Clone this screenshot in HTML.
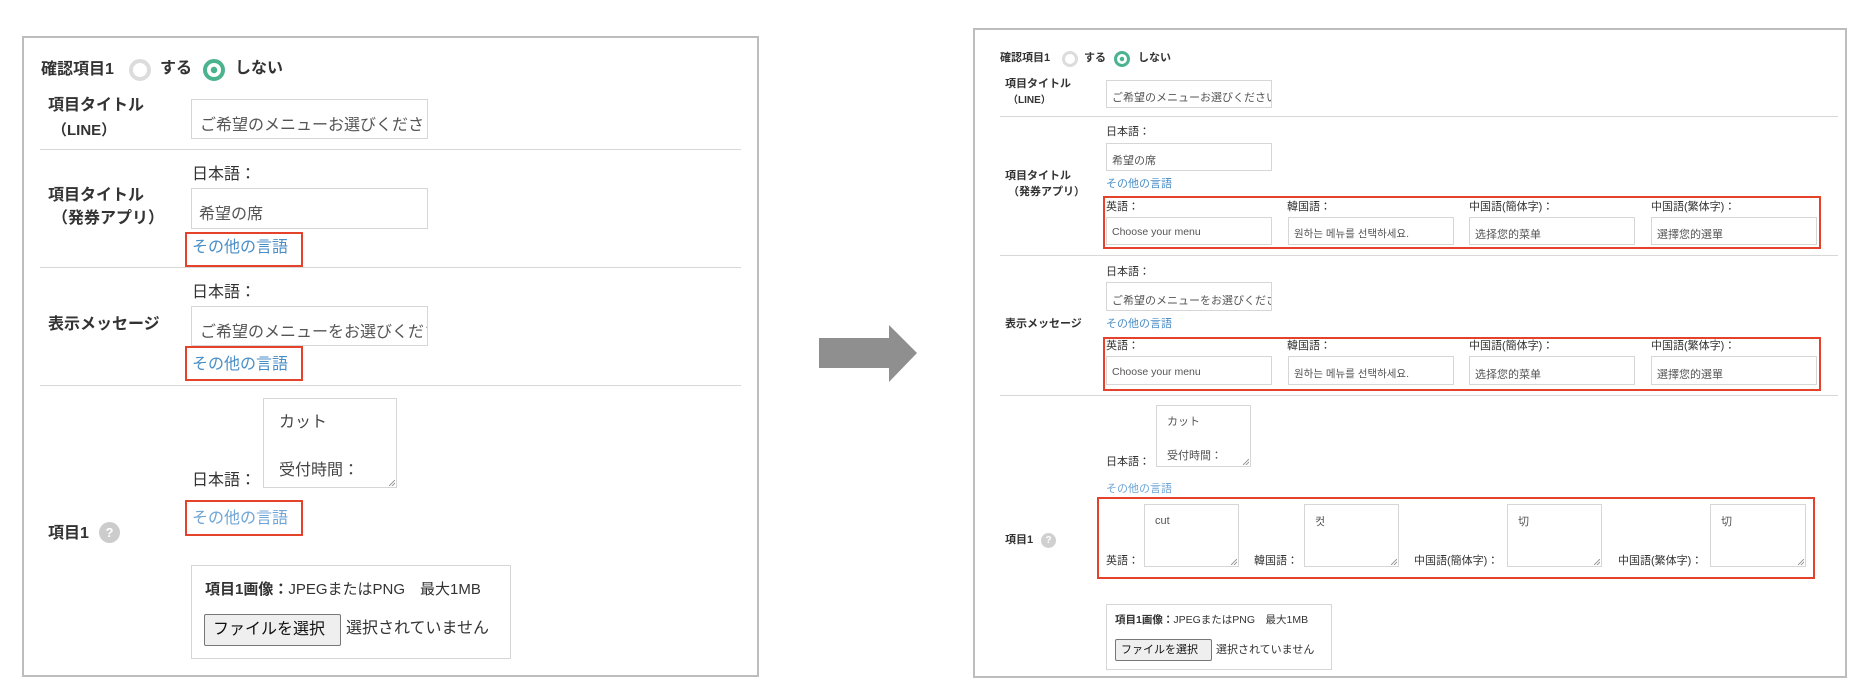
<!DOCTYPE html>
<html><head><meta charset="utf-8"><style>
*{margin:0;padding:0;box-sizing:border-box}
body{width:1866px;height:696px;background:#fff;position:relative;overflow:hidden;font-family:"Liberation Sans","Noto Sans CJK JP",sans-serif;color:#333}
.a{position:absolute;white-space:nowrap;line-height:1}
.b{font-weight:bold}
.box{position:absolute;border:1px solid #d6d6d6;background:#fff;overflow:hidden;white-space:nowrap;color:#555}
.red{position:absolute;border:2px solid #e5422b}
.hr{position:absolute;height:1px;background:#d8d8d8}
.lk{color:#4a8ec8}
.rad{position:absolute;border-radius:50%}
.ta:after{content:"";position:absolute;right:1px;bottom:1px;width:6px;height:6px;background:linear-gradient(135deg,transparent 45%,#999 46%,#999 55%,transparent 56%,transparent 70%,#999 71%,#999 80%,transparent 81%)}
.btn{position:absolute;background:#efefef;border:1px solid #777;border-radius:2px;color:#111;line-height:1}
</style></head><body>
<!-- LEFT PANEL -->
<div style="position:absolute;left:22px;top:36px;width:737px;height:641px;border:2px solid #bdbdbd"></div>
<div class="a b" style="left:41px;top:62px;font-size:16px">確認項目1</div>
<div class="rad" style="left:129px;top:59px;width:22px;height:22px;border:4px solid #dcdcdc"></div>
<div class="a b" style="left:160px;top:61px;font-size:16px">する</div>
<div class="rad" style="left:203px;top:59px;width:22px;height:22px;border:4px solid #4cb38f;background:radial-gradient(circle,#4cb38f 0 3px,#fff 3.5px)"></div>
<div class="a b" style="left:235px;top:61px;font-size:16px">しない</div>

<div class="a b" style="left:48px;top:98px;font-size:16px">項目タイトル</div>
<div class="a b" style="left:52px;top:123px;font-size:15px">（LINE）</div>
<div class="box" style="left:191px;top:99px;width:237px;height:40px;font-size:16px;padding:11px 0 0 8px">ご希望のメニューお選びくださ</div>
<div class="hr" style="left:40px;top:149px;width:701px"></div>

<div class="a" style="left:192px;top:167px;font-size:16px">日本語：</div>
<div class="box" style="left:191px;top:188px;width:237px;height:41px;font-size:16px;padding:11px 0 0 7px">希望の席</div>
<div class="a b" style="left:48px;top:188px;font-size:16px">項目タイトル</div>
<div class="a b" style="left:52px;top:211px;font-size:16px">（発券アプリ）</div>
<div class="red" style="left:185px;top:232px;width:118px;height:35px"></div>
<div class="a lk" style="left:192px;top:240px;font-size:16px">その他の言語</div>
<div class="hr" style="left:40px;top:267px;width:701px"></div>

<div class="a" style="left:192px;top:285px;font-size:16px">日本語：</div>
<div class="box" style="left:191px;top:306px;width:237px;height:40px;font-size:16px;padding:11px 0 0 8px">ご希望のメニューをお選びください</div>
<div class="a b" style="left:48px;top:317px;font-size:16px">表示メッセージ</div>
<div class="red" style="left:185px;top:346px;width:118px;height:35px"></div>
<div class="a lk" style="left:192px;top:357px;font-size:16px">その他の言語</div>
<div class="hr" style="left:40px;top:385px;width:701px"></div>

<div class="box ta" style="left:263px;top:398px;width:134px;height:90px;font-size:16px;padding:12px 0 0 15px;line-height:1.5;color:#444;white-space:normal">カット<br><br>受付時間：<br>10:00〜</div>
<div class="a" style="left:192px;top:473px;font-size:16px">日本語：</div>
<div class="red" style="left:185px;top:500px;width:118px;height:36px"></div>
<div class="a lk" style="left:192px;top:511px;font-size:16px;color:#6fa5d6">その他の言語</div>
<div class="a b" style="left:48px;top:526px;font-size:16px">項目1</div>
<div class="rad" style="left:99px;top:522px;width:21px;height:21px;background:#ccc;color:#fff;font-size:13px;text-align:center;line-height:21px;font-weight:bold">?</div>

<div style="position:absolute;left:191px;top:565px;width:320px;height:94px;border:1px solid #d6d6d6"></div>
<div class="a" style="left:205px;top:582px;font-size:15px"><b>項目1画像：</b>JPEGまたはPNG　最大1MB</div>
<div class="btn" style="left:204px;top:614px;width:137px;height:32px;font-size:16px;padding:7px 0 0 8px">ファイルを選択</div>
<div class="a" style="left:346px;top:621px;font-size:16px">選択されていません</div>

<!-- ARROW -->
<svg style="position:absolute;left:816px;top:323px" width="102" height="60"><polygon points="3,15 73,15 73,2 101,30 73,59 73,45 3,45" fill="#8f8f8f"/></svg>

<!-- RIGHT PANEL -->
<div style="position:absolute;left:973px;top:28px;width:874px;height:650px;border:2px solid #bdbdbd"></div>
<div class="a b" style="left:1000px;top:53px;font-size:11px">確認項目1</div>
<div class="rad" style="left:1062px;top:51px;width:16px;height:16px;border:3px solid #dcdcdc"></div>
<div class="a b" style="left:1084px;top:53px;font-size:11px">する</div>
<div class="rad" style="left:1114px;top:51px;width:16px;height:16px;border:3px solid #4cb38f;background:radial-gradient(circle,#4cb38f 0 2px,#fff 2.5px)"></div>
<div class="a b" style="left:1138px;top:53px;font-size:11px">しない</div>

<div class="a b" style="left:1005px;top:79px;font-size:11px">項目タイトル</div>
<div class="a b" style="left:1008px;top:96px;font-size:10px">（LINE）</div>
<div class="box" style="left:1106px;top:80px;width:166px;height:28px;font-size:11px;padding:8px 0 0 5px">ご希望のメニューお選びください</div>
<div class="hr" style="left:1000px;top:116px;width:838px"></div>

<div class="a" style="left:1106px;top:127px;font-size:11px">日本語：</div>
<div class="box" style="left:1106px;top:143px;width:166px;height:28px;font-size:11px;padding:8px 0 0 5px">希望の席</div>
<div class="a b" style="left:1005px;top:171px;font-size:11px">項目タイトル</div>
<div class="a b" style="left:1008px;top:187px;font-size:11px">（発券アプリ）</div>
<div class="a lk" style="left:1106px;top:179px;font-size:11px">その他の言語</div>
<div class="red" style="left:1103px;top:196px;width:718px;height:53px"></div>
<div class="a" style="left:1106px;top:202px;font-size:11px">英語：</div>
<div class="a" style="left:1287px;top:202px;font-size:11px">韓国語：</div>
<div class="a" style="left:1469px;top:202px;font-size:11px">中国語(簡体字)：</div>
<div class="a" style="left:1651px;top:202px;font-size:11px">中国語(繁体字)：</div>
<div class="box" style="left:1106px;top:217px;width:166px;height:28px;font-size:10.5px;padding:8px 0 0 5px">Choose your menu</div>
<div class="box" style="left:1288px;top:217px;width:166px;height:28px;font-size:10.5px;padding:8px 0 0 5px">원하는 메뉴를 선택하세요.</div>
<div class="box" style="left:1469px;top:217px;width:166px;height:28px;font-size:11px;padding:8px 0 0 5px">选择您的菜单</div>
<div class="box" style="left:1651px;top:217px;width:166px;height:28px;font-size:11px;padding:8px 0 0 5px">選擇您的選單</div>
<div class="hr" style="left:1000px;top:255px;width:838px"></div>

<div class="a" style="left:1106px;top:267px;font-size:11px">日本語：</div>
<div class="box" style="left:1106px;top:282px;width:166px;height:29px;font-size:11px;padding:9px 0 0 5px">ご希望のメニューをお選びください</div>
<div class="a b" style="left:1005px;top:319px;font-size:11px">表示メッセージ</div>
<div class="a lk" style="left:1106px;top:319px;font-size:11px">その他の言語</div>
<div class="red" style="left:1103px;top:337px;width:718px;height:54px"></div>
<div class="a" style="left:1106px;top:341px;font-size:11px">英語：</div>
<div class="a" style="left:1287px;top:341px;font-size:11px">韓国語：</div>
<div class="a" style="left:1469px;top:341px;font-size:11px">中国語(簡体字)：</div>
<div class="a" style="left:1651px;top:341px;font-size:11px">中国語(繁体字)：</div>
<div class="box" style="left:1106px;top:356px;width:166px;height:29px;font-size:10.5px;padding:9px 0 0 5px">Choose your menu</div>
<div class="box" style="left:1288px;top:356px;width:166px;height:29px;font-size:10.5px;padding:9px 0 0 5px">원하는 메뉴를 선택하세요.</div>
<div class="box" style="left:1469px;top:356px;width:166px;height:29px;font-size:11px;padding:9px 0 0 5px">选择您的菜单</div>
<div class="box" style="left:1651px;top:356px;width:166px;height:29px;font-size:11px;padding:9px 0 0 5px">選擇您的選單</div>
<div class="hr" style="left:1000px;top:395px;width:838px"></div>

<div class="box ta" style="left:1156px;top:405px;width:95px;height:62px;font-size:11px;padding:8px 0 0 10px;line-height:1.55;white-space:normal">カット<br><br>受付時間：<br>10:00〜</div>
<div class="a" style="left:1106px;top:457px;font-size:11px">日本語：</div>
<div class="a lk" style="left:1106px;top:484px;font-size:11px;color:#6fa5d6">その他の言語</div>
<div class="red" style="left:1097px;top:497px;width:718px;height:82px"></div>
<div class="box ta" style="left:1144px;top:504px;width:95px;height:63px;font-size:11px;padding:10px 0 0 10px">cut</div>
<div class="box ta" style="left:1304px;top:504px;width:95px;height:63px;font-size:11px;padding:8px 0 0 10px">컷</div>
<div class="box ta" style="left:1507px;top:504px;width:95px;height:63px;font-size:11px;padding:8px 0 0 10px">切</div>
<div class="box ta" style="left:1710px;top:504px;width:96px;height:63px;font-size:11px;padding:8px 0 0 10px">切</div>
<div class="a" style="left:1106px;top:556px;font-size:11px">英語：</div>
<div class="a" style="left:1254px;top:556px;font-size:11px">韓国語：</div>
<div class="a" style="left:1414px;top:556px;font-size:11px">中国語(簡体字)：</div>
<div class="a" style="left:1618px;top:556px;font-size:11px">中国語(繁体字)：</div>
<div class="a b" style="left:1005px;top:535px;font-size:11px">項目1</div>
<div class="rad" style="left:1041px;top:533px;width:15px;height:15px;background:#d0d0d0;color:#fff;font-size:10px;text-align:center;line-height:15px;font-weight:bold">?</div>

<div style="position:absolute;left:1106px;top:604px;width:226px;height:66px;border:1px solid #d6d6d6"></div>
<div class="a" style="left:1115px;top:615px;font-size:10.5px"><b>項目1画像：</b>JPEGまたはPNG　最大1MB</div>
<div class="btn" style="left:1115px;top:639px;width:97px;height:22px;font-size:11px;padding:5px 0 0 5px">ファイルを選択</div>
<div class="a" style="left:1216px;top:645px;font-size:11px">選択されていません</div>
</body></html>
